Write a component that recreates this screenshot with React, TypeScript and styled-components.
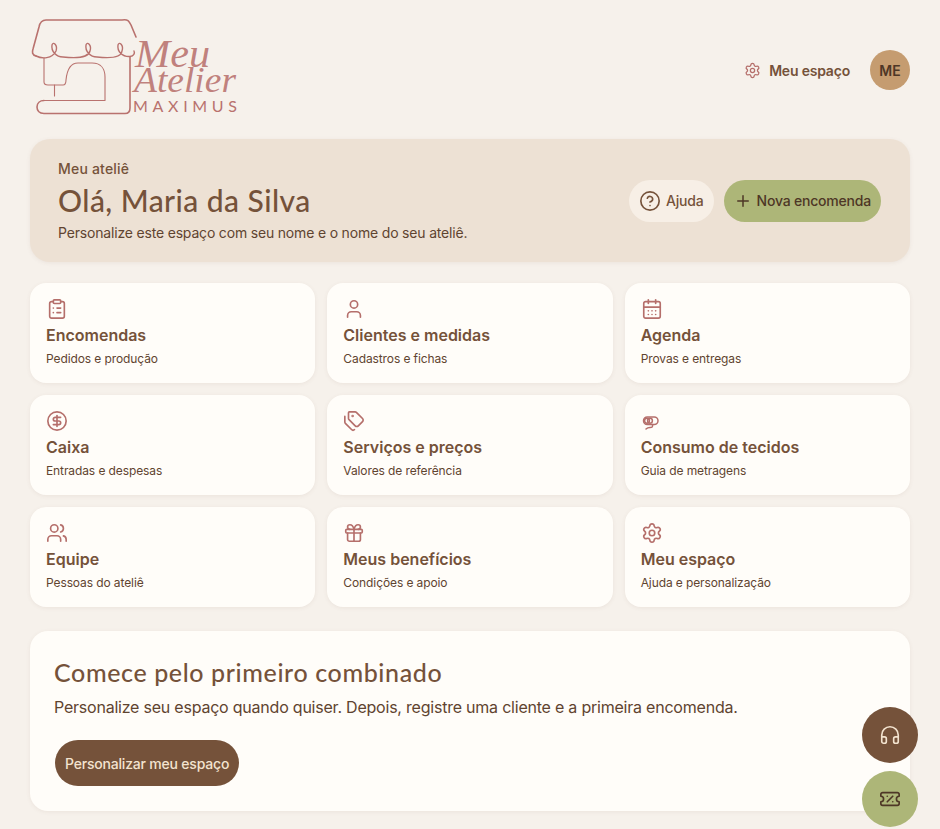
import styled, { createGlobalStyle } from 'styled-components';
import {
  CalendarDays,
  CircleDollarSign,
  CircleHelp,
  ClipboardList,
  Gift,
  Headphones,
  Plus,
  Settings,
  Tags,
  TicketPercent,
  User,
  Users,
} from 'lucide-react';
import type { ComponentType } from 'react';

const GlobalStyle = createGlobalStyle`
  * { box-sizing: border-box; }
  body {
    margin: 0;
    background: #f6f1eb;
    color: #75523a;
    font-family: Inter, "Liberation Sans", sans-serif;
  }
`;

const Page = styled.div`
  padding: 10px 30px 18px;
`;

const Header = styled.header`
  display: flex;
  align-items: center;
  justify-content: space-between;
  height: 120px;
  margin-bottom: 9px;
`;

const UserArea = styled.div`
  display: flex;
  align-items: center;
  gap: 20px;
`;

const NavLink = styled.a`
  display: flex;
  align-items: center;
  gap: 8px;
  font-size: 14px;
  font-weight: 600;
  letter-spacing: -0.2px;
  color: #75523a;
  svg { color: #b56f6b; }
`;

const Avatar = styled.div`
  width: 40px;
  height: 40px;
  border-radius: 50%;
  background: #c59c70;
  color: #4e3726;
  display: flex;
  align-items: center;
  justify-content: center;
  font-size: 14px;
  font-weight: 600;
`;

const Hero = styled.section`
  display: flex;
  align-items: center;
  justify-content: space-between;
  height: 123px;
  padding: 0 29px 0 28px;
  border-radius: 20px;
  background: #ede1d4;
  box-shadow: 0 1px 4px rgba(117, 82, 58, 0.08);
  margin-bottom: 21px;
`;

const Eyebrow = styled.p`
  margin: 1px 0 0;
  font-size: 14px;
  font-weight: 500;
  line-height: 20px;
  letter-spacing: 0.2px;
`;

const HeroTitle = styled.h1`
  margin: 3px 0 5px;
  font-family: Lato, sans-serif;
  font-size: 30px;
  font-weight: 500;
  letter-spacing: 0.45px;
  line-height: 36px;
`;

const HeroText = styled.p`
  margin: 0;
  font-size: 14px;
  line-height: 20px;
  letter-spacing: -0.18px;
  color: #5f4430;
`;

const Actions = styled.div`
  display: flex;
  gap: 10px;
`;

const PillButton = styled.button<{ $primary?: boolean }>`
  display: flex;
  align-items: center;
  gap: 5px;
  height: 42px;
  padding: 0 10px;
  border: 0;
  border-radius: 21px;
  font-family: inherit;
  font-size: 14px;
  font-weight: 500;
  letter-spacing: -0.2px;
  background: ${(p) => (p.$primary ? '#adb678' : '#f7efe6')};
  color: ${(p) => (p.$primary ? '#4e3726' : '#75523a')};
`;

const Grid = styled.div`
  display: grid;
  grid-template-columns: repeat(3, 1fr);
  gap: 12px;
  margin-bottom: 24px;
`;

const Card = styled.a`
  display: block;
  height: 100px;
  padding: 15px 16px 0;
  border-radius: 16px;
  background: #fffdf9;
  box-shadow: 0 1px 4px rgba(117, 82, 58, 0.08);
  svg { display: block; color: #b56f6b; }
`;

const CardTitle = styled.h3`
  margin: 4px 0 4px;
  font-size: 16px;
  font-weight: 600;
  line-height: 22px;
`;

const CardText = styled.p`
  margin: 0;
  font-size: 12px;
  line-height: 18px;
  letter-spacing: -0.1px;
  color: #5f4430;
`;

const Starter = styled.section`
  height: 180px;
  padding: 26px 24px 0;
  border-radius: 18px;
  background: #fffdf9;
  box-shadow: 0 1px 4px rgba(117, 82, 58, 0.08);
`;

const StarterTitle = styled.h2`
  margin: 0 0 8px;
  font-family: Lato, sans-serif;
  font-size: 25px;
  font-weight: 500;
  letter-spacing: 0.62px;
  line-height: 30px;
`;

const StarterText = styled.p`
  margin: 0 0 21px;
  font-size: 16px;
  line-height: 24px;
  letter-spacing: -0.22px;
  color: #5f4430;
`;

const StarterButton = styled.button`
  height: 46px;
  margin-left: 1px;
  padding: 0 10px;
  border: 0;
  border-radius: 23px;
  background: #75523a;
  color: #f3e3cf;
  font-family: inherit;
  font-size: 14px;
  font-weight: 500;
  letter-spacing: -0.2px;
`;

const Floating = styled.div`
  position: fixed;
  right: 22px;
  bottom: 2px;
  display: flex;
  flex-direction: column;
  gap: 8px;
`;

const Fab = styled.button<{ $green?: boolean }>`
  width: 56px;
  height: 56px;
  border: 0;
  border-radius: 50%;
  display: flex;
  align-items: center;
  justify-content: center;
  background: ${(p) => (p.$green ? '#adb678' : '#75523a')};
  color: ${(p) => (p.$green ? '#4e3726' : '#f3e3cf')};
`;

const LogoLink = styled.a`
  display: block;
  align-self: flex-start;
  width: 210px;
  height: 102px;
  margin-top: 5px;
`;

const logoFont = '"Liberation Serif", serif';

const Logo = () => (
  <LogoLink>
    <svg width="210" height="102" viewBox="0 0 210 102" fill="none" stroke="#b9726e" strokeLinecap="round" strokeLinejoin="round">
      <path d="M6 41C2 40 2 37 3 34L9 12C10 7 12 5 16 5H92C98 4 99 6 101 10L106 22" strokeWidth="1.6" />
      <path
        d="M6 41C12 44 22 44 26 36C28 30 23 26 22 30C21 36 26 42 33 42C42 43 58 44 60 36C62 30 57 26 56 30C55 36 60 42 67 42C76 43 91 44 92 36C94 30 89 26 88 30C87 36 92 42 100 41.5C104 41 105 38 104 36"
        strokeWidth="1.4"
      />
      <path d="M14 43V67C14 69 16 70 18 70H33C35 70 36 68 36 65C37 55 40 48 48 48H62C71 48 75 54 75 62V85.5H14" strokeWidth="1.1" />
      <path d="M24.5 70V81" strokeWidth="1.1" />
      <path d="M100 42V93C100 97 98 98.5 95 98.5H14C9 98.5 7 95 7 92C7 88 10 85.5 14 85.5" strokeWidth="1.6" />
      <g fill="#b9726e" stroke="none">
        <text x="105" y="52" fontFamily={logoFont} fontStyle="italic" fontSize="40" textLength="75" lengthAdjust="spacingAndGlyphs" fillOpacity="0.88">
          Meu
        </text>
        <text x="104" y="77" fontFamily={logoFont} fontStyle="italic" fontSize="36" textLength="102" lengthAdjust="spacingAndGlyphs" fillOpacity="0.88">
          Atelier
        </text>
        <text x="103" y="97" fontFamily="Lato, sans-serif" fontSize="16" textLength="104">
          MAXIMUS
        </text>
      </g>
    </svg>
  </LogoLink>
);

// not in lucide: the thread spool of "Consumo de tecidos"
const Spool = ({ size = 22 }: { size?: number }) => (
  <svg width={size} height={size} viewBox="0 0 22 22" fill="none" stroke="currentColor" strokeWidth="1.5" strokeLinecap="round" strokeLinejoin="round">
    <rect x="2.5" y="7" width="14.5" height="7.5" rx="3.75" />
    <circle cx="6" cy="10.75" r="2.4" />
    <circle cx="9" cy="10.75" r="2.4" />
    <path d="M11.5 14.5C12 17 11 17.5 9 17.5C7.5 17.5 6 18 5 19" />
  </svg>
);

const items: { icon: ComponentType<{ size?: number; strokeWidth?: number }>; title: string; text: string }[] = [
  { icon: ClipboardList, title: 'Encomendas', text: 'Pedidos e produção' },
  { icon: User, title: 'Clientes e medidas', text: 'Cadastros e fichas' },
  { icon: CalendarDays, title: 'Agenda', text: 'Provas e entregas' },
  { icon: CircleDollarSign, title: 'Caixa', text: 'Entradas e despesas' },
  { icon: Tags, title: 'Serviços e preços', text: 'Valores de referência' },
  { icon: Spool, title: 'Consumo de tecidos', text: 'Guia de metragens' },
  { icon: Users, title: 'Equipe', text: 'Pessoas do ateliê' },
  { icon: Gift, title: 'Meus benefícios', text: 'Condições e apoio' },
  { icon: Settings, title: 'Meu espaço', text: 'Ajuda e personalização' },
];

export default function App() {
  return (
    <Page>
      <GlobalStyle />
      <Header>
        <Logo />
        <UserArea>
          <NavLink>
            <Settings size={17} strokeWidth={1.8} />
            Meu espaço
          </NavLink>
          <Avatar>ME</Avatar>
        </UserArea>
      </Header>
      <Hero>
        <div>
          <Eyebrow>Meu ateliê</Eyebrow>
          <HeroTitle>Olá, Maria da Silva</HeroTitle>
          <HeroText>Personalize este espaço com seu nome e o nome do seu ateliê.</HeroText>
        </div>
        <Actions>
          <PillButton>
            <CircleHelp size={22} strokeWidth={1.8} />
            Ajuda
          </PillButton>
          <PillButton $primary>
            <Plus size={18} strokeWidth={2} />
            Nova encomenda
          </PillButton>
        </Actions>
      </Hero>
      <Grid>
        {items.map(({ icon: Icon, title, text }) => (
          <Card key={title}>
            <Icon size={22} strokeWidth={1.8} />
            <CardTitle>{title}</CardTitle>
            <CardText>{text}</CardText>
          </Card>
        ))}
      </Grid>
      <Starter>
        <StarterTitle>Comece pelo primeiro combinado</StarterTitle>
        <StarterText>Personalize seu espaço quando quiser. Depois, registre uma cliente e a primeira encomenda.</StarterText>
        <StarterButton>Personalizar meu espaço</StarterButton>
      </Starter>
      <Floating>
        <Fab>
          <Headphones size={22} strokeWidth={1.8} />
        </Fab>
        <Fab $green>
          <TicketPercent size={22} strokeWidth={1.8} />
        </Fab>
      </Floating>
    </Page>
  );
}
